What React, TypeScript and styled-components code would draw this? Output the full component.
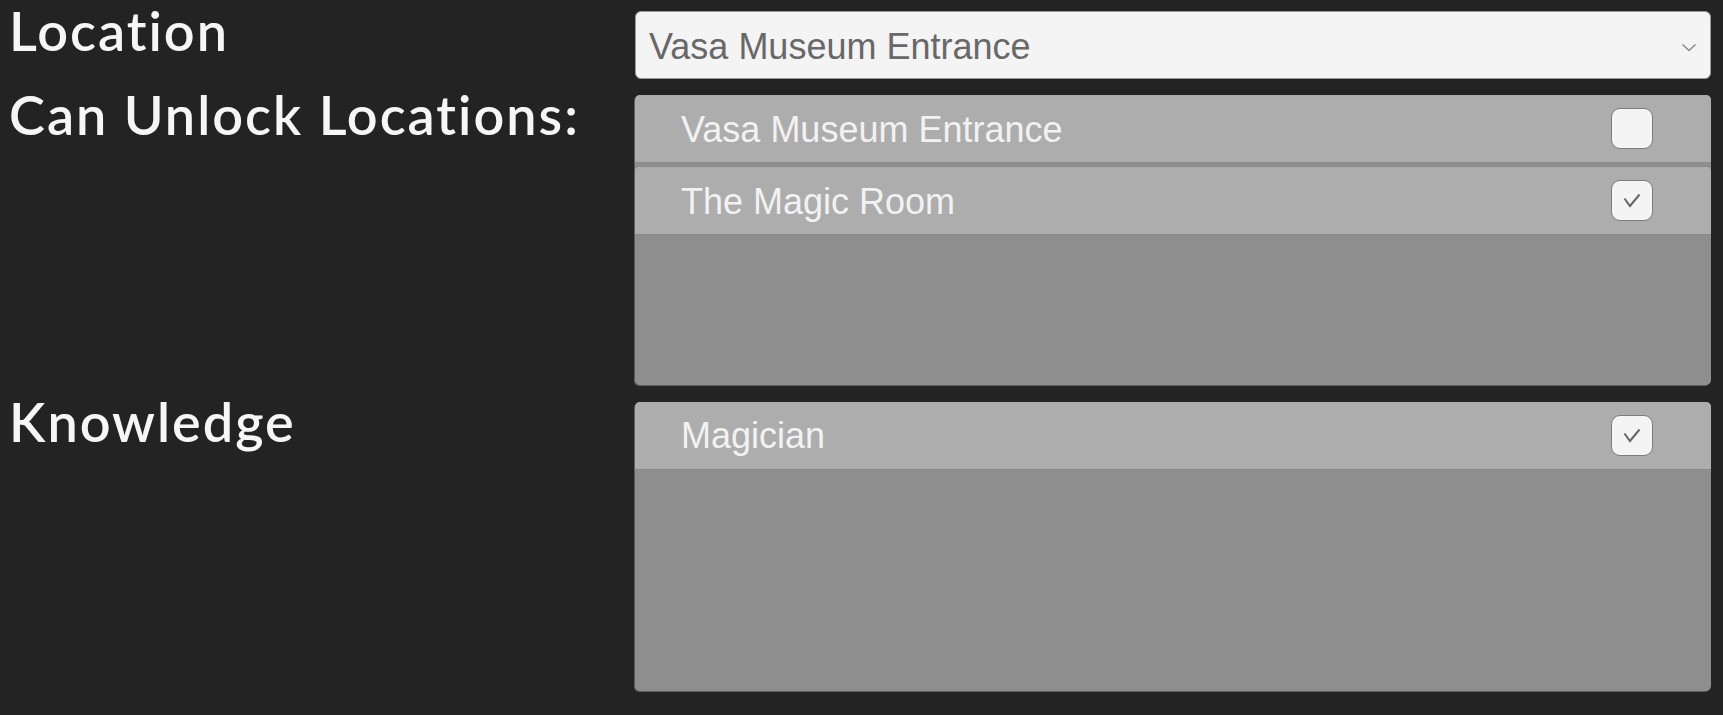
import React, { FC } from "react";
import styled, { createGlobalStyle } from "styled-components";

const GlobalStyle = createGlobalStyle`
  html, body {
    margin: 0;
    padding: 0;
    background: #232323;
  }
  body {
    font-family: "Liberation Sans", Arial, sans-serif;
  }
`;

const Page = styled.div`
  display: grid;
  grid-template-columns: 626px 1fr;
  row-gap: 16px;
  padding: 11px 12px 24px 9px;
  min-height: 715px;
  box-sizing: border-box;
`;

const Label = styled.div`
  font-family: Lato, "Noto Sans", sans-serif;
  font-weight: 600;
  font-size: 54px;
  line-height: 1;
  color: #f6f6f6;
  margin-top: -7px;
  letter-spacing: 2px;
`;

const Dropdown = styled.div`
  height: 68px;
  box-sizing: border-box;
  background: #f4f4f4;
  border: 1px solid #9a9a9a;
  border-radius: 6px;
  display: flex;
  align-items: center;
  justify-content: space-between;
  padding: 4px 13px 0 13px;
  font-size: 36px;
  color: #686868;
`;

const List = styled.div<{ $height: number }>`
  height: ${(p) => p.$height}px;
  background: #8e8e8e;
  border-radius: 5px;
  box-shadow: -1px 1px 0 #5e5e5e;
  display: flex;
  flex-direction: column;
  gap: 5px;
  overflow: hidden;
`;

const Row = styled.div`
  height: 67px;
  flex: none;
  box-sizing: border-box;
  background: #adadad;
  border-radius: 4px 4px 0 0;
  box-shadow: 0 1px 0 #8a8a8a;
  display: flex;
  align-items: center;
  justify-content: space-between;
  padding: 2px 58px 0 46px;
  font-size: 36px;
  color: #f2f2f2;
`;

const Checkbox = styled.div`
  width: 42px;
  height: 41px;
  margin-top: -2px;
  box-sizing: border-box;
  background: #f4f4f4;
  border: 1px solid #7c7c7c;
  border-radius: 9px;
  display: flex;
  align-items: center;
  justify-content: center;
`;

const Chevron = () => (
  <svg width="16" height="9" viewBox="0 0 16 9">
    <path d="M1.5 1.5 L8 7.5 L14.5 1.5" fill="none" stroke="#8d8d8d" strokeWidth="1.6" />
  </svg>
);

const Check = () => (
  <svg width="18" height="15" viewBox="0 0 18 15">
    <path d="M1.5 5.5 L7 13 L16.5 1.5" fill="none" stroke="#666" strokeWidth="2" />
  </svg>
);

type Item = { name: string; checked: boolean };

const CheckList: FC<{ items: Item[]; height: number }> = ({ items, height }) => (
  <List $height={height}>
    {items.map((item, idx) => (
      <Row key={`Item_${item.name}_${idx}`}>
        <span>{item.name}</span>
        <Checkbox>{item.checked && <Check />}</Checkbox>
      </Row>
    ))}
  </List>
);

const App: FC = () => {
  return (
    <>
      <GlobalStyle />
      <Page>
        <Label>Location</Label>
        <Dropdown>
          <span>Vasa Museum Entrance</span>
          <Chevron />
        </Dropdown>

        <Label>Can Unlock Locations:</Label>
        <CheckList
          height={290}
          items={[
            { name: "Vasa Museum Entrance", checked: false },
            { name: "The Magic Room", checked: true },
          ]}
        />

        <Label>Knowledge</Label>
        <CheckList height={289} items={[{ name: "Magician", checked: true }]} />
      </Page>
    </>
  );
};

export default App;
